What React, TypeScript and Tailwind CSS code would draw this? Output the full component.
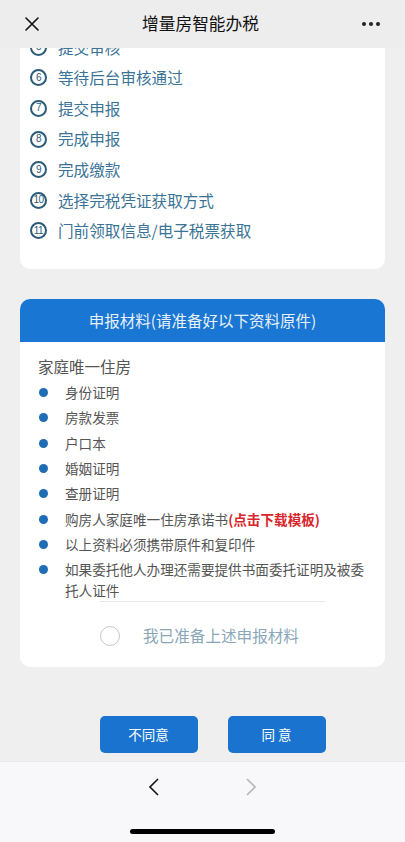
import React from 'react';

const steps = [
    {n: 5, label: '提交审核'},
    {n: 6, label: '等待后台审核通过'},
    {n: 7, label: '提交申报'},
    {n: 8, label: '完成申报'},
    {n: 9, label: '完成缴款'},
    {n: 10, label: '选择完税凭证获取方式'},
    {n: 11, label: '门前领取信息/电子税票获取'},
];

const materials: React.ReactNode[] = [
    '身份证明',
    '房款发票',
    '户口本',
    '婚姻证明',
    '查册证明',
    <>购房人家庭唯一住房承诺书<span className="text-[#d9262c] font-bold">(点击下载模板)</span></>,
    '以上资料必须携带原件和复印件',
    '如果委托他人办理还需要提供书面委托证明及被委托人证件',
];

const font = {fontFamily: '"Noto Sans CJK SC", "Noto Sans", sans-serif'};

const App: React.FC = () => {
    return (
        <div className="w-[405px] h-[842px] flex flex-col bg-[#efefef] overflow-hidden" style={font}>
            {/* top bar */}
            <header className="relative z-10 h-[48px] shrink-0 bg-[#ededed] flex items-center justify-between px-[25px]">
                <svg width="14" height="14" viewBox="0 0 14 14" className="text-[#111]">
                    <path d="M1 1 L13 13 M13 1 L1 13" stroke="currentColor" strokeWidth="1.6" strokeLinecap="round"/>
                </svg>
                <h1 className="text-[16.7px] text-[#111] font-normal">增量房智能办税</h1>
                <div className="flex gap-[3px]">
                    <span className="w-[4px] h-[4px] rounded-full bg-[#222]"/>
                    <span className="w-[4px] h-[4px] rounded-full bg-[#222]"/>
                    <span className="w-[4px] h-[4px] rounded-full bg-[#222]"/>
                </div>
            </header>

            {/* scrolled content */}
            <main className="h-[713px] shrink-0 overflow-hidden">
                <div className="-mt-[16px] px-[20px]">
                    <div className="bg-white rounded-b-[10px] pl-[10px] pb-[23px]">
                        {steps.map((s) => (
                            <div key={s.n} className="h-[30.6px] flex items-center gap-[11px]">
                                <span className="w-[17px] h-[17px] rounded-full border-[2px] border-[#2a5b79] flex items-center justify-center text-[#2a5b79] text-[10px] leading-none tracking-[-0.5px]"
                                      style={{fontFamily: '"Liberation Sans", sans-serif'}}>
                                    {s.n}
                                </span>
                                <span className="text-[15.6px] text-[#3b7396]">{s.label}</span>
                            </div>
                        ))}
                    </div>

                    <div className="mt-[30px] bg-white rounded-[10px] overflow-hidden">
                        <div className="h-[43px] bg-[#1976d2] flex items-center justify-center text-[15.5px] text-[#e8f1fb]">
                            申报材料(请准备好以下资料原件)
                        </div>
                        <div className="pl-[18px] pr-[12px] pt-[13px] pb-[19px]">
                            <div className="text-[15.5px] leading-[22px] text-[#555]">家庭唯一住房</div>
                            <ul className="mt-[5px] flex flex-col gap-[4.3px]">
                                {materials.map((m, i) => (
                                    <li key={i} className="flex items-start">
                                        <span className="mt-[6px] ml-[1px] w-[9px] h-[9px] rounded-full bg-[#1f6db5] shrink-0"/>
                                        <span className="ml-[17px] flex-1 text-[13.6px] leading-[21px] text-[#555]">{m}</span>
                                    </li>
                                ))}
                            </ul>
                            <div className="ml-[62px] mr-[48px] h-px bg-[#e6e6e6]"/>
                            <div className="mt-[22px] flex items-center pl-[62px]">
                                <span className="w-[20px] h-[20px] rounded-full border border-[#c8c8c8]"/>
                                <span className="ml-[23px] text-[15.6px] text-[#8aa7b8]">我已准备上述申报材料</span>
                            </div>
                        </div>
                    </div>

                    <div className="mt-[49px] flex justify-center gap-[30px] pl-[20px]">
                        <button className="w-[98px] h-[37px] rounded-[5px] bg-[#1a74cf] text-white text-[13.5px]">不同意</button>
                        <button className="w-[98px] h-[37px] rounded-[5px] bg-[#1a74cf] text-white text-[13.5px]">同 意</button>
                    </div>
                </div>
            </main>

            {/* bottom browser bar */}
            <footer className="flex-1 bg-[#f8f8fa] border-t border-[#e9e9ec] relative">
                <div className="flex justify-center gap-[85px] pt-[16px]">
                    <svg width="12" height="18" viewBox="0 0 12 18">
                        <path d="M10 1 L2 9 L10 17" fill="none" stroke="#111" strokeWidth="1.6"/>
                    </svg>
                    <svg width="12" height="18" viewBox="0 0 12 18">
                        <path d="M2 1 L10 9 L2 17" fill="none" stroke="#b5b5b8" strokeWidth="1.6"/>
                    </svg>
                </div>
                <div className="absolute left-[130px] bottom-[8px] w-[145px] h-[5px] rounded-full bg-black"/>
            </footer>
        </div>
    );
};

export default App;
